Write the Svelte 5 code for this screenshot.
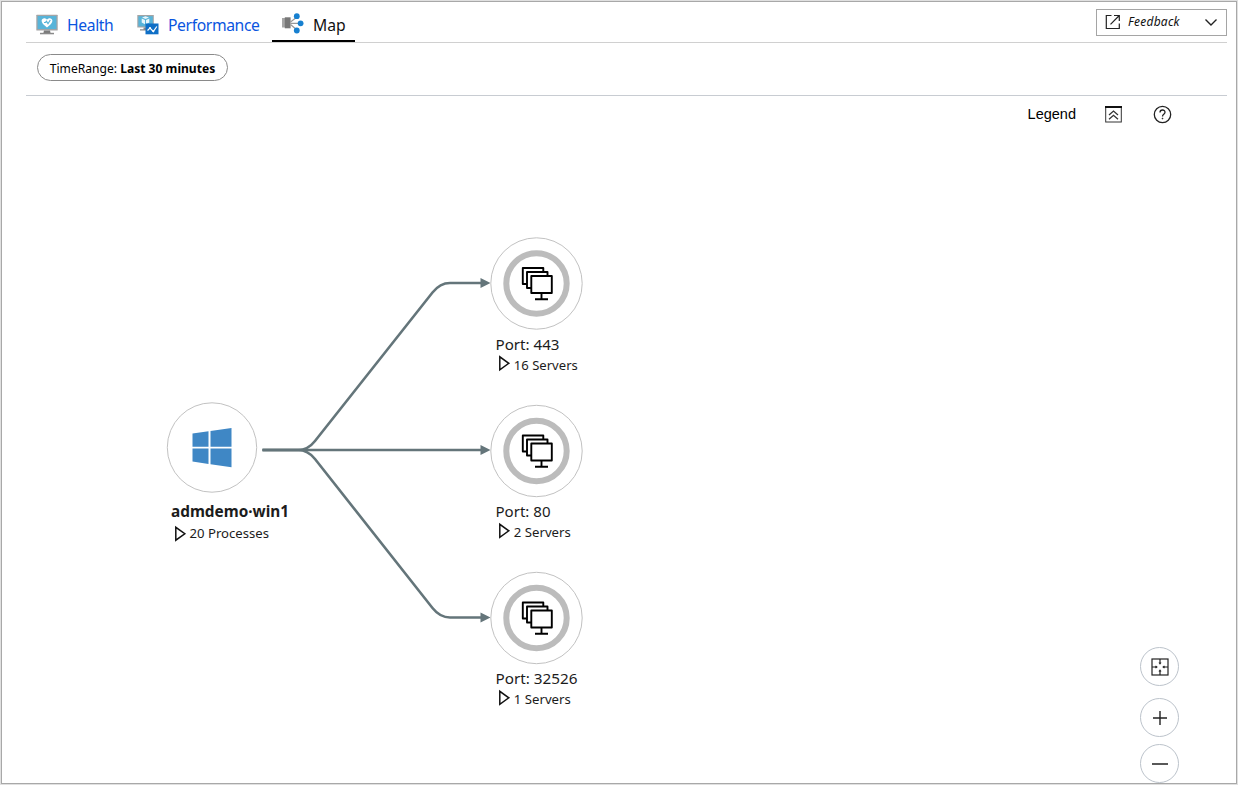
<script>
  const ports = [
    { y: 283.5, port: '443', servers: 16, pw: 64, sw: 64 },
    { y: 451, port: '80', servers: 2, pw: 55, sw: 57 },
    { y: 618, port: '32526', servers: 1, pw: 82, sw: 57 }
  ];
</script>

<div class="frame">
  <header class="tabs">
    <div class="tab health">
      <svg width="22" height="22" viewBox="0 0 22 22">
        <rect x="0.3" y="0.7" width="21.4" height="15.8" rx="0.6" fill="#a3a4a5" />
        <rect x="1.6" y="2" width="18.8" height="13" fill="#58b4d9" />
        <path d="M8 16.5h6l.7 3H7.300z" fill="#7a7a7a" />
        <rect x="4" y="18.800" width="14" height="1.500" fill="#8a8a8a" />
        <path d="M11 13.500C7.500 10.800 5.600 9 5.600 6.800c0-3 3.900-3.600 5.400-1.100 1.500-2.500 5.400-1.900 5.400 1.100 0 2.200-1.900 4-5.400 6.700z" fill="#fff" />
        <path d="M8 8.500h1.500l1-1.200 1.500 2.400 2.300-3.700" fill="none" stroke="#58b4d9" stroke-width="1.200" />
      </svg>
      <span>Health</span>
    </div>
    <div class="tab performance">
      <svg width="22" height="22" viewBox="0 0 22 22">
        <rect x="0.300" y="1" width="16.500" height="12.500" fill="#a3a4a5" />
        <rect x="1.400" y="2.200" width="14.400" height="10.200" fill="#58b4d9" />
        <path d="M5 3.500l3.500-1.300L12 3.500 8.500 5zM4.700 4.500L8 6v4.300L4.700 8.600zM12.300 4.500L9 6v4.300l3.300-1.700z" fill="#e8f6fb" />
        <path d="M6.500 13.500h3v3H3V15.200h3.500z" fill="#8a8a8a" />
        <rect x="8.500" y="9.500" width="13" height="10.800" fill="#0f6fc6" />
        <path d="M10.500 16.500l2.500-2.500 3.300 3.500 3.500-5" fill="none" stroke="#fff" stroke-width="1.200" />
        <circle cx="13" cy="14" r="1" fill="#fff" /><circle cx="16.300" cy="17.300" r="1" fill="#fff" />
      </svg>
      <span>Performance</span>
    </div>
    <div class="tab map active">
      <svg width="22" height="22" viewBox="0 0 22 22">
        <rect x="0" y="5" width="5" height="9.500" fill="#a6a6a6" />
        <rect x="2.800" y="4.300" width="5.800" height="11" fill="#777" />
        <path d="M8.500 9l6.500-5M8.500 10.300h10M8.500 11.500l6.500 5.500" stroke="#999" stroke-width="1.200" fill="none" />
        <circle cx="14.800" cy="3.200" r="2.900" fill="#1780d0" />
        <circle cx="18.600" cy="10.300" r="2.900" fill="#1780d0" />
        <circle cx="14.800" cy="17.500" r="2.900" fill="#1780d0" />
      </svg>
      <span>Map</span>
    </div>
    <button class="feedback">
      <svg width="16" height="16" viewBox="0 0 16 16" fill="none" stroke="#222" stroke-width="1.200">
        <path d="M6.500 1.500H1.300v13h13V9.500M9 1.500h5.300V7M14.300 1.500L5.500 10.300" />
      </svg>
      <span>Feedback</span>
      <svg class="chevron" width="14" height="9" viewBox="0 0 14 9" fill="none" stroke="#222" stroke-width="1.400">
        <path d="M1.500 1.500L7 7l5.500-5.500" />
      </svg>
    </button>
  </header>

  <div class="filters">
    <div class="pill">TimeRange:&nbsp;<b>Last 30 minutes</b></div>
  </div>

  <main>
    <svg class="graph" width="1234" height="686" viewBox="2 96 1234 686">
      <g fill="none" stroke="#64757a" stroke-width="2.600">
        <path d="M262.500 450H482" />
        <path d="M262.500 450H298Q308 450 315 441L432.500 292.500Q440 283 450 283H482" />
        <path d="M262.500 450H298Q308 450 315 459L432.500 608Q440 617.500 450 617.500H482" />
      </g>
      <path d="M480.500 278l10 5-10 5zM480.500 445l10 5-10 5zM480.500 612.500l10 5-10 5z" fill="#64757a" />

      <circle cx="212" cy="447.500" r="44.700" fill="#fff" stroke="#c2c2c2" />
      <path d="M192.500 433.600l16-2.300v15.400h-16zM210.500 431l21-3v18.700h-21zM192.500 448.500h16v15.400l-16-2.300zM210.500 448.500h21v18.700l-21-3z" fill="#3f87c5" />
      <text x="171" y="517" font-size="15.500" font-weight="700" textLength="118" lengthAdjust="spacingAndGlyphs">admdemo·win1</text>
      <path class="expand" d="M175.800 527.300v12.900l9-6.450z" />
      <text x="189.500" y="538" font-size="13.200" textLength="79.500" lengthAdjust="spacingAndGlyphs">20 Processes</text>

      {#each ports as p}
        <g transform="translate(536.5 {p.y})">
          <circle r="45.700" fill="#fff" stroke="#c2c2c2" />
          <circle r="30.200" fill="none" stroke="#bcbcbc" stroke-width="6" />
          <g fill="#fff" stroke="#000" stroke-width="1.900" stroke-linejoin="round">
            <rect x="-13.700" y="-15.500" width="20.500" height="16" />
            <rect x="-9.500" y="-11.500" width="20.500" height="16" />
            <rect x="-5.200" y="-7.500" width="20.500" height="17" />
            <path d="M5 9.500v6.300M-1.500 15.800h13" />
          </g>
          <text x="-41" y="66" font-size="15.300" textLength={p.pw} lengthAdjust="spacingAndGlyphs">Port: {p.port}</text>
          <path class="expand" d="M-36.700 73.300v13l9-6.500z" />
          <text x="-22.700" y="86.300" font-size="13.200" textLength={p.sw} lengthAdjust="spacingAndGlyphs">{p.servers} Servers</text>
        </g>
      {/each}
    </svg>

    <div class="tools">
      <span>Legend</span>
      <svg width="17" height="17" viewBox="0 0 17 17" fill="none" stroke="#333">
        <rect x="0.700" y="1" width="15.600" height="15" />
        <path d="M0 1h17" stroke="#111" stroke-width="2" />
        <path d="M4 9l4.500-4 4.500 4M4 13.300l4.500-4 4.500 4" stroke-width="1.300" />
      </svg>
      <svg width="19" height="19" viewBox="0 0 19 19" fill="none" stroke="#222" stroke-width="1.300">
        <circle cx="9.500" cy="9.500" r="8.200" />
        <path d="M7 7.500c0-3.300 5-3.300 5-.2 0 2-2.500 2.100-2.500 4.200" />
        <circle cx="9.500" cy="13.500" r=".5" fill="#222" stroke-width=".7" />
      </svg>
    </div>

    <div class="zoom">
      <button class="fit" aria-label="Fit">
        <svg width="18" height="18" viewBox="0 0 18 18" fill="none" stroke="#222" stroke-width="1.200">
          <rect x="1" y="1" width="16" height="16" />
          <path d="M9 1v5M9 17v-5M1 9h5M17 9h-5M8 4.500l1 1.300 1-1.300M8 13.500l1-1.300 1 1.300M4.500 8l1.300 1-1.300 1M13.500 8l-1.300 1 1.300 1" />
        </svg>
      </button>
      <button class="in" aria-label="Zoom in">
        <svg width="18" height="18" viewBox="0 0 18 18" stroke="#222" stroke-width="1.400"><path d="M2 9h14M9 2v14" /></svg>
      </button>
      <button class="out" aria-label="Zoom out">
        <svg width="18" height="18" viewBox="0 0 18 18" stroke="#222" stroke-width="1.500"><path d="M1 9h16" /></svg>
      </button>
    </div>
  </main>
</div>

<style>
  :global(body) { background: #fff; }
  .frame {
    box-sizing: border-box;
    width: 1236px;
    height: 783px;
    margin: 1px;
    border: 1px solid #a8a8a8;
    box-shadow: 0 0 0 1px #e0e0e0;
    overflow: hidden;
    display: flex;
    flex-direction: column;
    font-family: "Noto Sans", "Open Sans", sans-serif;
    color: #111;
  }
  :global(#app) { display: flow-root; }
  svg { flex: none; display: block; }
  .tabs {
    box-sizing: border-box;
    height: 41px;
    margin: 0 9px 0 24px;
    border-bottom: 1px solid #d0d0d0;
    display: flex;
    align-items: stretch;
    flex: none;
  }
  .tab {
    box-sizing: border-box;
    display: flex;
    align-items: center;
    height: 40px;
    font-size: 15.700px;
    letter-spacing: -0.380px;
    color: #0a55e0;
    white-space: nowrap;
  }
  .tab span { margin-top: 5px; }
  .tab svg { margin-top: 5px; }
  .health { width: 101px; padding-left: 10px; gap: 9px; }
  .performance { width: 145px; padding-left: 10px; gap: 9px; }
  .map { width: 83px; padding-left: 10px; gap: 9px; letter-spacing: 0; }
  .active { color: #111; border-bottom: 2px solid #000; }
  .active span { margin-top: 7px; }
  .feedback {
    box-sizing: border-box;
    width: 131px;
    height: 27px;
    margin: 7px 0 0 auto;
    border: 1px solid #a5a5a5;
    background: #fff;
    padding: 0 8px;
    display: flex;
    align-items: center;
    font: italic 12px "Noto Sans", sans-serif;
    letter-spacing: 0.250px;
    color: #111;
  }
  .feedback span { margin: -2px 0 0 7px; }
  .feedback svg { margin-top: -1px; }
  .feedback .chevron { margin: 0 0 0 auto; }
  .filters {
    box-sizing: border-box;
    height: 53px;
    margin: 0 9px 0 24px;
    border-bottom: 1px solid #c8ccd2;
    padding: 11px 0 0 11px;
    flex: none;
  }
  .pill {
    box-sizing: border-box;
    width: 191px;
    height: 27px;
    border: 1px solid #8a8a8a;
    border-radius: 14px;
    display: flex;
    align-items: center;
    justify-content: center;
    font-size: 12.100px;
    white-space: nowrap;
    padding-top: 2px;
    color: #000;
  }
  main { position: relative; flex: 1; min-height: 0; }
  .graph text { fill: #1c1c1c; }
  .expand { fill: #fff; stroke: #111; stroke-width: 1.5; }
  .tools {
    position: absolute;
    top: 9px;
    right: 64px;
    display: flex;
    align-items: center;
    font: 14.500px "Liberation Sans", sans-serif;
    color: #000;
  }
  .tools span { margin: -2px 29px 0 0; }
  .tools svg + svg { margin-left: 31px; }
  .zoom {
    position: absolute;
    top: 551px;
    right: 57px;
    display: flex;
    flex-direction: column;
  }
  .zoom button {
    box-sizing: border-box;
    width: 39px;
    height: 39px;
    padding: 0;
    border: 1px solid #bcc3cb;
    border-radius: 50%;
    background: #fff;
    display: flex;
    align-items: center;
    justify-content: center;
  }
  .zoom .in { margin-top: 12px; }
  .zoom .out { margin-top: 7px; }
</style>
